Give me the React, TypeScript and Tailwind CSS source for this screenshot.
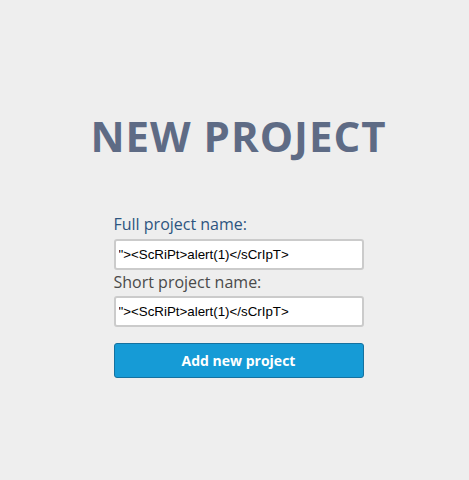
export default function App() {
  const payload = '"><ScRiPt>alert(1)</sCrIpT>';

  return (
    <div className="min-h-[480px] w-full bg-[#eeeeee] font-['Open_Sans',sans-serif]">
      <div className="flex flex-col items-center pl-[8px] pt-[108px]">
        <h1 className="text-[42px] font-bold leading-[56px] tracking-[1px] text-[#5e6b85]">
          NEW PROJECT
        </h1>
        <form className="mt-[49px] flex w-[250px] flex-col">
          <label className="text-[16px] leading-[22px] text-[#2d5580]">
            Full project name:
          </label>
          <input
            type="text"
            defaultValue={payload}
            className="mt-[4px] h-[31px] rounded-[3px] border-2 border-[#cbcbcb] bg-white px-[3px] font-['Liberation_Sans',Arial,sans-serif] text-[13.33px] text-black outline-none"
          />
          <label className="mt-[1px] text-[16px] leading-[23px] text-[#4a4a4a]">
            Short project name:
          </label>
          <input
            type="text"
            defaultValue={payload}
            className="mt-[2px] h-[31px] rounded-[3px] border-2 border-[#cbcbcb] bg-white px-[3px] font-['Liberation_Sans',Arial,sans-serif] text-[13.33px] text-black outline-none"
          />
          <button
            type="button"
            className="mt-[16px] h-[35px] rounded-[3px] border border-[#15719f] bg-[#169bd6] text-[14px] font-bold text-white"
          >
            Add new project
          </button>
        </form>
      </div>
    </div>
  );
}
